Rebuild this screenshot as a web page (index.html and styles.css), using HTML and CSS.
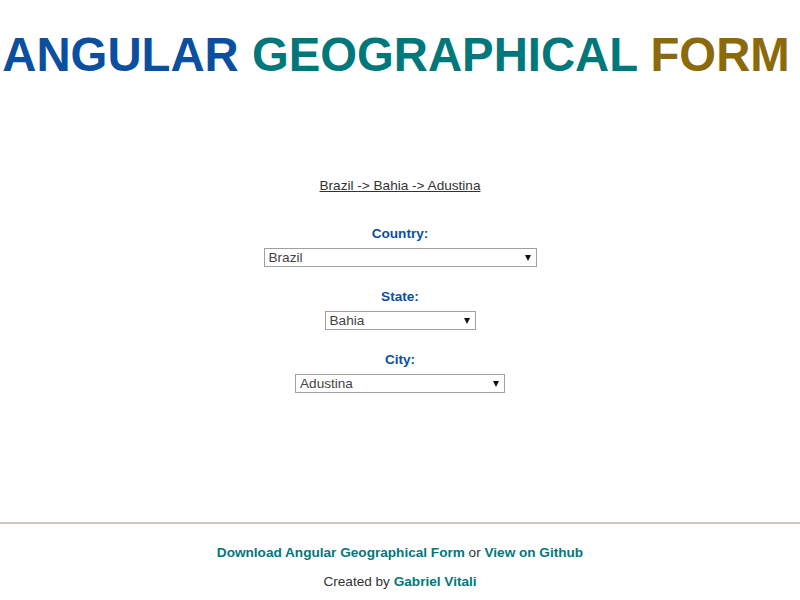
FILE: index.html
```html
<!DOCTYPE html>
<html>
<head>
<meta charset="utf-8">
<title>Angular Geographical Form</title>
<link rel="stylesheet" href="styles.css">
</head>
<body>
<header class="masthead">
  <h1 class="title"><span class="t-blue">ANGULAR</span> <span class="t-teal">GEOGRAPHICAL</span> <span class="t-gold">FORM</span></h1>
</header>
<main class="content">
  <p class="crumb"><a href="#">Brazil -&gt; Bahia -&gt; Adustina</a></p>
  <form class="geo-form">
    <div class="field">
      <label class="field-label" for="country">Country:</label>
      <span class="select-wrap select-country">
        <select id="country" class="select"><option>Brazil</option></select>
      </span>
    </div>
    <div class="field">
      <label class="field-label" for="state">State:</label>
      <span class="select-wrap select-state">
        <select id="state" class="select"><option>Bahia</option></select>
      </span>
    </div>
    <div class="field">
      <label class="field-label" for="city">City:</label>
      <span class="select-wrap select-city">
        <select id="city" class="select"><option>Adustina</option></select>
      </span>
    </div>
  </form>
</main>
<footer class="footer">
  <p class="footer-line"><a href="#" class="footer-link">Download Angular Geographical Form</a> or <a href="#" class="footer-link">View on Github</a></p>
  <p class="footer-line">Created by <a href="#" class="footer-link">Gabriel Vitali</a></p>
</footer>
</body>
</html>
```
FILE: styles.css
```css
html, body {
  margin: 0;
  padding: 0;
  background: #ffffff;
}
body {
  font-family: "Liberation Sans", Arial, sans-serif;
  font-size: 13.6px;
  line-height: 16px;
  color: #333333;
}
.masthead {
  padding-top: 31px;
  padding-right: 8px;
}
.title {
  margin: 0;
  text-align: center;
  font-size: 47.3px;
  line-height: 47px;
  font-weight: bold;
  white-space: nowrap;
}
.t-blue { color: #0b4fa0; }
.t-teal { color: #00787b; }
.t-gold { color: #8b6a0b; }

.content {
  padding-top: 100px;
  text-align: center;
}
.crumb {
  margin: 0;
}
.crumb a {
  color: #333333;
  text-decoration: underline;
}
.geo-form {
  margin-top: 32px;
  display: flex;
  flex-direction: column;
  align-items: center;
  gap: 22px;
}
.field {
  display: flex;
  flex-direction: column;
  align-items: center;
  gap: 6px;
}
.field-label {
  font-weight: bold;
  color: #0b4fa0;
}
.select-wrap {
  position: relative;
  display: block;
  height: 19px;
}
.select-wrap::after {
  content: "";
  position: absolute;
  right: 6px;
  top: 7px;
  border-left: 3.5px solid transparent;
  border-right: 3.5px solid transparent;
  border-top: 6px solid #111111;
  pointer-events: none;
}
.select {
  -webkit-appearance: none;
  appearance: none;
  display: block;
  box-sizing: border-box;
  width: 100%;
  height: 19px;
  margin: 0;
  padding: 0 0 0 4px;
  border: 1px solid #a0a0a0;
  border-radius: 0;
  background: #ffffff;
  font-family: "Liberation Sans", Arial, sans-serif;
  font-size: 13.6px;
  line-height: 17px;
  color: #444444;
}
.select-country { width: 273px; }
.select-state { width: 151px; }
.select-city { width: 210px; }

.footer {
  margin-top: 129px;
  border-top: 2px solid #cbc7bc;
  padding-top: 21px;
  text-align: center;
}
.footer-line {
  margin: 0 0 13px 0;
}
.footer-link {
  color: #00787b;
  font-weight: bold;
  text-decoration: none;
}
```
